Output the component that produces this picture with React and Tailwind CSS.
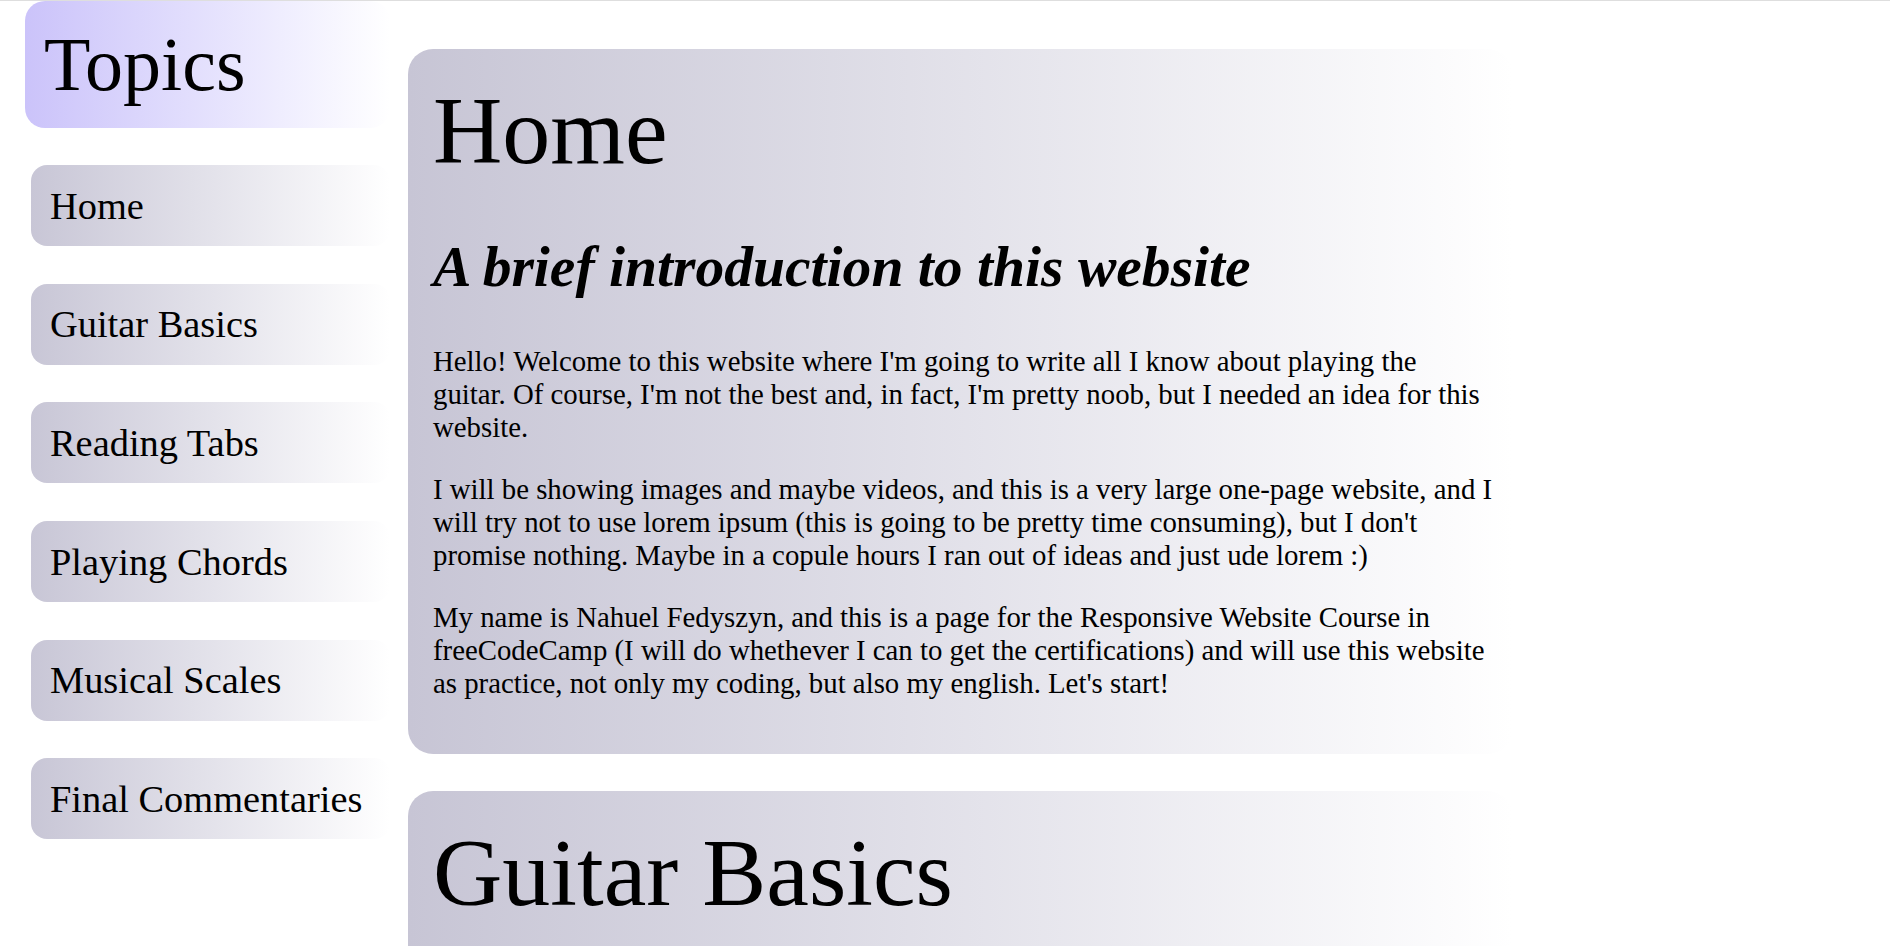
import React from 'react';

const topics = [
  'Home',
  'Guitar Basics',
  'Reading Tabs',
  'Playing Chords',
  'Musical Scales',
  'Final Commentaries',
];

const serif = "font-['Liberation_Serif','Times_New_Roman',serif]";

function NavBar() {
  return (
    <nav className="w-[365px] shrink-0 ml-[25px]">
      <header className="rounded-[20px] bg-linear-to-r from-[#cbc3fa] to-white p-5 pl-[19px]">
        <h1 className="text-[76px] leading-[normal]">Topics</h1>
      </header>
      <ul className="mt-[37px] flex flex-col gap-[37.7px]">
        {topics.map((t) => (
          <li key={t} className="ml-[6px]">
            <a
              href={'#' + t.toLowerCase().replace(/ /g, '_')}
              className="block rounded-[16px] bg-linear-to-r from-[#c8c6d6] to-white px-[19px] py-[18.5px] text-[38.4px] leading-[normal] text-black"
            >
              {t}
            </a>
          </li>
        ))}
      </ul>
    </nav>
  );
}

function Section({ title, subtitle, children }) {
  return (
    <section className="w-[1105px] rounded-[25px] bg-linear-to-r from-[#c7c5d5] to-white pt-[26px] pb-[54px] pl-[25px] pr-[19px]">
      <h1 className="text-[96px] leading-[normal]">{title}</h1>
      {subtitle && (
        <h2 className="mt-[48px] text-[57.6px] leading-[normal] font-bold italic">{subtitle}</h2>
      )}
      {children && (
        <div className="mt-[46px] flex flex-col gap-[29px] text-[28.8px] leading-[normal]">
          {children}
        </div>
      )}
    </section>
  );
}

export default function App() {
  return (
    <div className={`min-h-screen bg-white text-black border-t border-[#dedede] ${serif}`}>
      <div className="flex items-start">
        <NavBar />
        <main className="ml-[18px] mt-[48px] flex flex-col gap-[37px]">
          <Section title="Home" subtitle="A brief introduction to this website">
            <p>
              Hello! Welcome to this website where I'm going to write all I know about playing the
              guitar. Of course, I'm not the best and, in fact, I'm pretty noob, but I needed an idea
              for this website.
            </p>
            <p>
              I will be showing images and maybe videos, and this is a very large one-page website,
              and I will try not to use lorem ipsum (this is going to be pretty time consuming), but I
              don't promise nothing. Maybe in a copule hours I ran out of ideas and just ude lorem :)
            </p>
            <p>
              My name is Nahuel Fedyszyn, and this is a page for the Responsive Website Course in
              freeCodeCamp (I will do whethever I can to get the certifications) and will use this
              website as practice, not only my coding, but also my english. Let's start!
            </p>
          </Section>
          <Section title="Guitar Basics" subtitle="What you need to know before starting">
            <p>
              Before playing anything, let's talk about the parts of the guitar and how to hold it
              properly.
            </p>
          </Section>
        </main>
      </div>
    </div>
  );
}
